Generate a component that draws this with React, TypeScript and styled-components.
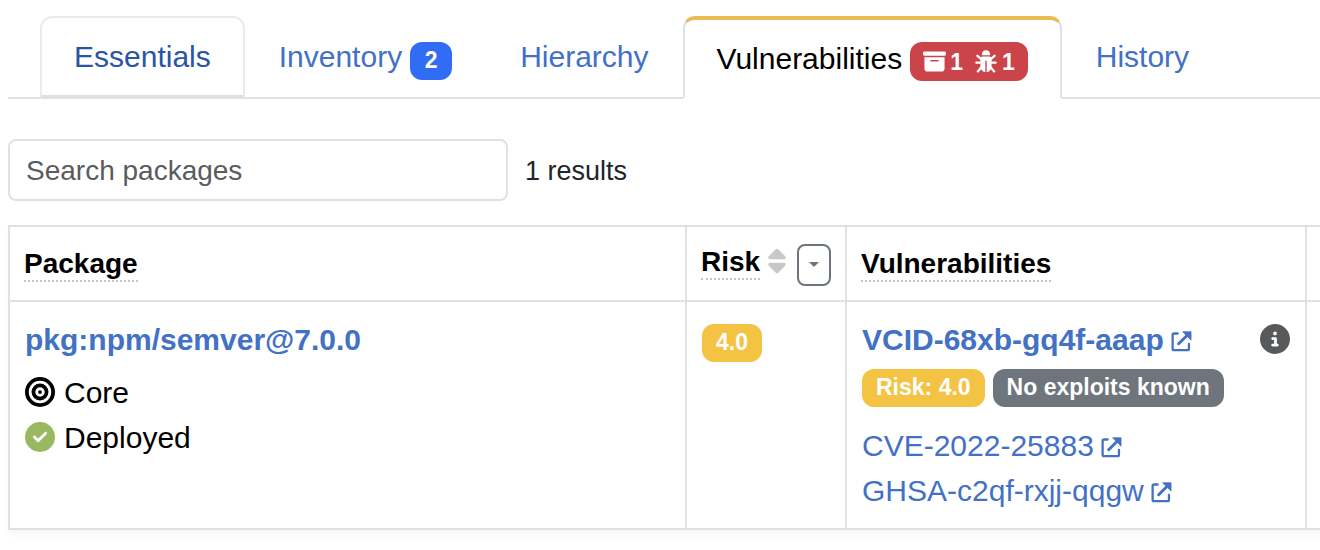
import React from "react";
import styled, { createGlobalStyle, css } from "styled-components";
import {
  FaBoxArchive,
  FaBullseye,
  FaCircleCheck,
  FaCircleInfo,
  FaSort,
} from "react-icons/fa6";

const line = "#dee2e6";
const linkColor = "#4271c6";

const GlobalStyle = createGlobalStyle`
  *, *::before, *::after { box-sizing: border-box; }
  body {
    margin: 0;
    background: #fff;
    color: #000;
    font-family: "Liberation Sans", Arial, Helvetica, sans-serif;
    font-size: 30px;
    line-height: 45px;
    overflow-x: hidden;
  }
  a { color: ${linkColor}; text-decoration: none; }
`;

const Page = styled.div`
  padding: 16px 0 20px 8px;
  overflow: hidden;
`;

const TabBar = styled.nav`
  display: flex;
  padding-left: 32px;
  border-bottom: 2px solid ${line};
`;

type TabState = "normal" | "hover" | "active";

const Tab = styled.a<{ $state?: TabState }>`
  display: flex;
  align-items: flex-start;
  gap: 8px;
  height: 83px;
  margin-bottom: -2px;
  padding: 16px 32px 0;
  border: 2px solid transparent;
  border-radius: 12px 12px 0 0;
  white-space: nowrap;
  ${({ $state }) =>
    $state === "hover" &&
    css`
      color: #2a54a5;
      border-color: #e9ecef #e9ecef ${line};
      border-bottom-width: 4px;
    `}
  ${({ $state }) =>
    $state === "active" &&
    css`
      color: #000;
      background: #fff;
      border-color: #e9bb53 ${line} #fff;
      border-top-width: 4px;
    `}
`;

const colors = {
  blue: "#316cf4",
  red: "#ca444a",
  yellow: "#f5c344",
  gray: "#6e757c",
};

const Badge = styled.span<{ $color: keyof typeof colors }>`
  display: inline-flex;
  align-items: center;
  justify-content: center;
  height: 38px;
  min-width: 42px;
  padding: 0 14px 2px;
  border-radius: 12px;
  background: ${({ $color }) => colors[$color]};
  color: #fff;
  font-size: 23px;
  font-weight: 700;
  line-height: 36px;
  white-space: nowrap;
`;

const TabBadge = styled(Badge)`
  margin-top: 8px;
`;

const CountBadge = styled(Badge)`
  gap: 12px;
  height: 39px;
  margin-top: 6px;
  padding: 0 13px;
`;

const Count = styled.span`
  display: inline-flex;
  align-items: center;
  gap: 4px;
`;

const Toolbar = styled.div`
  display: flex;
  align-items: center;
  gap: 17px;
  margin: 40px 0 24px;
  color: #212529;
`;

const Search = styled.input`
  width: 500px;
  height: 62px;
  padding: 2px 16px 0;
  border: 2px solid ${line};
  border-radius: 8px;
  font: inherit;
  font-size: 28px;
  color: #212529;
  &::placeholder { color: #595c5f; opacity: 1; }
`;

const ResultCount = styled.span`
  padding-top: 2px;
  font-size: 27px;
  line-height: 42px;
`;

const Table = styled.table`
  width: calc(100% + 120px);
  table-layout: fixed;
  border-collapse: collapse;
  box-shadow: 0 4px 8px rgba(0, 0, 0, 0.04);
`;

const Col = styled.col<{ $width?: number }>`
  width: ${({ $width }) => ($width ? `${$width}px` : "auto")};
`;

const Th = styled.th`
  height: 75px;
  padding: 2px 14px 0;
  border: 2px solid ${line};
  text-align: left;
  font-size: 28px;
  line-height: 32px;
  vertical-align: middle;
`;

const Label = styled.span`
  display: inline-block;
  border-bottom: 2px dotted #c4c4c4;
`;

const SortHead = styled.div`
  display: flex;
  align-items: flex-start;
  justify-content: space-between;
`;

const SortTitle = styled.div`
  display: flex;
  align-items: center;
  gap: 8px;
  height: 38px;
`;

const SortLink = styled.a`
  display: flex;
  color: #c8c8c8;
  padding-bottom: 4px;
  svg { width: 18px; height: 28px; }
`;

const FilterButton = styled.button`
  display: flex;
  flex: none;
  align-items: center;
  justify-content: center;
  width: 34px;
  height: 42px;
  padding: 0;
  border: 2px solid #6c757d;
  border-radius: 8px;
  background: #fff;
  color: #6c757d;
`;

const Td = styled.td`
  height: 226px;
  padding: 15px;
  border: 2px solid ${line};
  vertical-align: top;
`;

const PackageLink = styled.a`
  display: block;
  font-weight: 700;
`;

const Status = styled.div<{ $first?: boolean }>`
  display: flex;
  align-items: center;
  gap: 9px;
  margin-top: ${({ $first }) => ($first ? 8 : 0)}px;
  svg { margin-bottom: 2px; }
`;

const VulnHead = styled.div`
  display: flex;
  align-items: center;
  justify-content: space-between;
  > svg { margin-bottom: 2px; }
`;

const ExternalLink = styled.a<{ $strong?: boolean }>`
  display: flex;
  align-items: center;
  gap: 7px;
  font-weight: ${({ $strong }) => ($strong ? 700 : 400)};
  white-space: nowrap;
  svg { margin-top: 4px; }
`;

const Badges = styled.div`
  display: flex;
  gap: 8px;
  margin: 7px 0 16px;
`;

const Aliases = styled.div`
  display: grid;
  justify-items: start;
`;

const BugIcon = () => (
  <svg width="23" height="23" viewBox="0 0 23 23" fill="none" aria-hidden>
    <path d="M6.8 5.2Q6.8.3 11 .3T15.2 5.2Z" fill="currentColor" />
    <path
      d="M10.3 22.2Q5.4 21.2 5.4 15.5V8.8Q5.4 6.4 7.8 6.4H14.2Q16.6 6.4 16.6 8.8V15.5Q16.6 21.2 11.7 22.2V10.8H10.3Z"
      fill="currentColor"
    />
    <path
      d="M6.6 9.4L2.4 5.8M15.4 9.4L19.6 5.8M6 12.7H1.4M16 12.7H20.6M6.6 17L2.8 21.4M15.4 17L19.2 21.4"
      stroke="currentColor"
      strokeWidth="2.3"
      strokeLinecap="round"
    />
  </svg>
);

const External = ({ text, strong }: { text: string; strong?: boolean }) => (
  <ExternalLink href="#" $strong={strong}>
    {text}
    <svg width="21" height="21" viewBox="0 0 22 22" fill="none" aria-hidden>
      <path
        d="M7 2.6H3.2Q1.7 2.6 1.7 4.1V18.6Q1.7 20.1 3.2 20.1H17.3Q18.8 20.1 18.8 18.6V13.5"
        stroke="currentColor"
        strokeWidth="2.4"
        strokeLinecap="round"
      />
      <path d="M8 13.4L17 4.4" stroke="currentColor" strokeWidth="3.1" strokeLinecap="round" />
      <path d="M12.2.8H21V9.6Z" fill="currentColor" stroke="currentColor" strokeWidth=".8" strokeLinejoin="round" />
    </svg>
  </ExternalLink>
);

export default function App() {
  return (
    <>
      <GlobalStyle />
      <Page>
        <TabBar>
          <Tab href="#" $state="hover">Essentials</Tab>
          <Tab href="#">
            Inventory <TabBadge $color="blue">2</TabBadge>
          </Tab>
          <Tab href="#">Hierarchy</Tab>
          <Tab href="#" $state="active" aria-current="page">
            Vulnerabilities
            <CountBadge $color="red">
              <Count><FaBoxArchive aria-hidden />1</Count>
              <Count><BugIcon />1</Count>
            </CountBadge>
          </Tab>
          <Tab href="#">History</Tab>
        </TabBar>

        <Toolbar>
          <Search type="search" placeholder="Search packages" aria-label="Search packages" />
          <ResultCount>1 results</ResultCount>
        </Toolbar>

        <Table>
          <colgroup>
            <Col $width={677} />
            <Col $width={160} />
            <Col $width={460} />
            <Col />
          </colgroup>
          <thead>
            <tr>
              <Th scope="col"><Label>Package</Label></Th>
              <Th scope="col">
                <SortHead>
                  <SortTitle>
                    <Label>Risk</Label>
                    <SortLink href="#" aria-label="Sort by risk"><FaSort /></SortLink>
                  </SortTitle>
                  <FilterButton type="button" aria-label="Filter by risk">
                    <svg width="10" height="5" viewBox="0 0 10 5" aria-hidden>
                      <path d="M0 0h10L5 5z" fill="currentColor" />
                    </svg>
                  </FilterButton>
                </SortHead>
              </Th>
              <Th scope="col"><Label>Vulnerabilities</Label></Th>
              <Th />
            </tr>
          </thead>
          <tbody>
            <tr>
              <Td>
                <PackageLink href="#">pkg:npm/semver@7.0.0</PackageLink>
                <Status $first><FaBullseye aria-hidden />Core</Status>
                <Status><FaCircleCheck color="#98b95f" aria-hidden />Deployed</Status>
              </Td>
              <Td><Badge $color="yellow">4.0</Badge></Td>
              <Td>
                <VulnHead>
                  <External text="VCID-68xb-gq4f-aaap" strong />
                  <FaCircleInfo color="#57595b" aria-hidden />
                </VulnHead>
                <Badges>
                  <Badge $color="yellow">Risk: 4.0</Badge>
                  <Badge $color="gray">No exploits known</Badge>
                </Badges>
                <Aliases>
                  <External text="CVE-2022-25883" />
                  <External text="GHSA-c2qf-rxjj-qqgw" />
                </Aliases>
              </Td>
              <Td />
            </tr>
          </tbody>
        </Table>
      </Page>
    </>
  );
}
